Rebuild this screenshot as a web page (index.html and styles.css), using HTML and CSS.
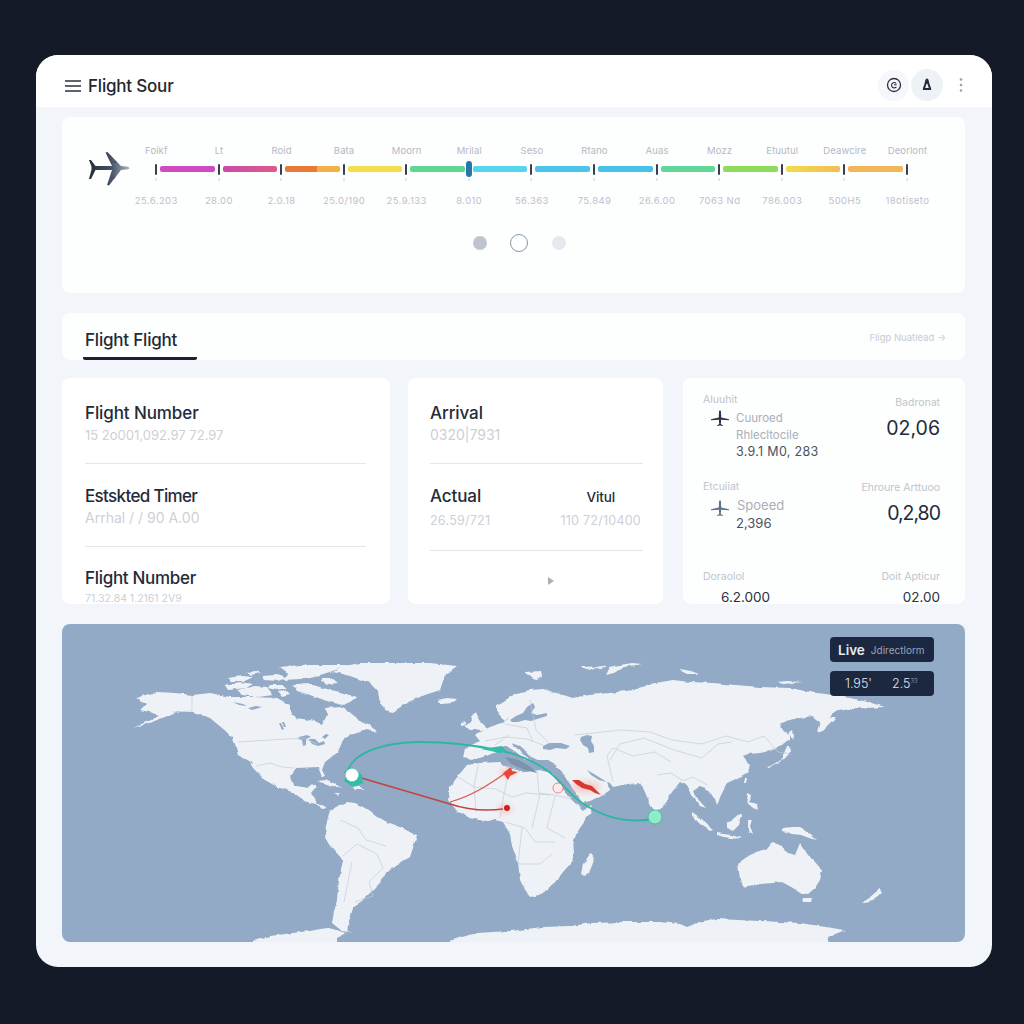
FILE: index.html
```html
<!DOCTYPE html>
<html lang="en">
<head>
<meta charset="utf-8">
<title>Flight Sour</title>
<link rel="stylesheet" href="styles.css">
</head>
<body>
<div class="app">
  <header class="topbar">
    <div class="brand">
      <svg class="menu" viewBox="0 0 16 12" width="16" height="12"><path d="M0 1h16M0 6h16M0 11h16" stroke="#2a3140" stroke-width="1.300" fill="none"/></svg>
      <span class="brand-name">Flight Sour</span>
    </div>
    <div class="actions">
      <span class="icon-btn first"><svg viewBox="0 0 16 16" width="16" height="16"><circle cx="8" cy="8" r="6.500" fill="none" stroke="#2a3140" stroke-width="1.300"/><path d="M10.300 6.500A2.700 2.700 0 1 0 10.400 9.800M8 7.800h2.600" fill="none" stroke="#2a3140" stroke-width="1.100"/></svg></span>
      <span class="icon-btn second"><svg viewBox="0 0 16 16" width="16" height="16"><path d="M8 1.500C6.300 1.500 6.200 4.500 5.300 7.500 4.800 9.300 3.800 10.500 3.800 13h8.400c0-2.500-1-3.700-1.500-5.500C9.800 4.500 9.700 1.500 8 1.500Z" fill="#252c3a"/><path d="M8 6.500C7.300 6.500 7 8.800 6.200 11h3.600C9 8.800 8.700 6.500 8 6.500Z" fill="#eef1f6"/></svg></span>
      <svg class="kebab" viewBox="0 0 4 16" width="4" height="16"><circle cx="2" cy="2.500" r="1.300" fill="#9aa1ac"/><circle cx="2" cy="8" r="1.300" fill="#9aa1ac"/><circle cx="2" cy="13.500" r="1.300" fill="#9aa1ac"/></svg>
    </div>
  </header>

  <main class="content">
    <section class="card timeline">
      <div class="timeline-row">
        <svg class="plane-side" viewBox="0 0 44 36" width="44" height="36">
          <defs><linearGradient id="pl" x1="0" x2="1"><stop offset="0" stop-color="#242c3a"/><stop offset=".55" stop-color="#465366"/><stop offset="1" stop-color="#aeb5be"/></linearGradient></defs>
          <path d="M1 9L3 9 7.500 15 24 15 17.500 1.500 19.500 1 33 15 40 15.700Q43 17 40 18.300L33 19 21 34.500 19 34 24 19 7.500 19 3 28 1 28 3.500 18.500 3.500 15.500Z" fill="url(#pl)"/>
          <path d="M24 9.500l4.500 1.200-.4 1.300-3-.6ZM22.500 26.500l4.500-.7.400 1.300-4.500 1Z" fill="#465366"/>
        </svg>
        <div class="stops">
          <div class="labels">
            <span>Foikf</span><span>Lt</span><span>Roid</span><span>Bata</span><span>Moorn</span><span>Mrilal</span><span>Seso</span><span>Rtano</span><span>Auas</span><span>Mozz</span><span>Etuutul</span><span>Deawcire</span><span>Deorlont</span>
          </div>
          <div class="track">
            <i class="tick"></i><b class="seg s1"></b><i class="tick"></i><b class="seg s2"></b><i class="tick"></i><b class="seg s3"></b><i class="tick"></i><b class="seg s4"></b><i class="tick"></i><b class="seg s5"></b><i class="tick now"></i><b class="seg s6"></b><i class="tick"></i><b class="seg s7"></b><i class="tick"></i><b class="seg s8"></b><i class="tick"></i><b class="seg s9"></b><i class="tick"></i><b class="seg s10"></b><i class="tick"></i><b class="seg s11"></b><i class="tick"></i><b class="seg s12"></b><i class="tick"></i>
          </div>
          <div class="labels values">
            <span>25.6.203</span><span>28.00</span><span>2.0.18</span><span>25.0/190</span><span>25.9.133</span><span>8.010</span><span>56.363</span><span>75.849</span><span>26.6.00</span><span>7063 Nd</span><span>786.003</span><span>500H5</span><span>18otiseto</span>
          </div>
        </div>
      </div>
      <div class="pager">
        <span class="dot grey"></span><span class="dot ring"></span><span class="dot pale"></span>
      </div>
    </section>

    <nav class="card tabs">
      <span class="tab">Flight Flight</span>
      <span class="tab-link">Fligp Nuatlead -&gt;</span>
    </nav>

    <section class="details">
      <article class="card info wide">
        <div class="field"><h3>Flight Number</h3><p class="long">15 2o001,092.97 72.97</p></div>
        <div class="field"><h3 class="tight">Estskted Timer</h3><p>Arrhal / / 90 A.00</p></div>
        <div class="field last"><h3 class="snug">Flight Number</h3><p class="small">71.32.84 1.2161 2V9</p></div>
      </article>

      <article class="card info narrow">
        <div class="field"><h3>Arrival</h3><p>0320|7931</p></div>
        <div class="field pair">
          <div><h3>Actual</h3><p class="mid">26.59/721</p></div>
          <div class="end"><h3 class="minor">Vitul</h3><p class="mid">110 72/10400</p></div>
        </div>
        <div class="more"><svg viewBox="0 0 6 8" width="6" height="8"><path d="M0 0l6 4-6 4Z" fill="#a8aeb8"/></svg></div>
      </article>

      <article class="card stats">
        <div class="stat first">
          <div class="stat-main">
            <span class="cap">Aluuhit</span>
            <div class="with-icon">
              <svg viewBox="0 0 20 20" width="20" height="20"><path d="M10 1.500c.6 0 1 .5 1 1.500l.2 5.500 7.800 1.700v1l-7.900-.4-.3 4.200 2 1.200v.8l-2.800-.6-2.800.6v-.8l2-1.200-.3-4.200-7.900.4v-1l7.800-1.700L9 3c0-1 .4-1.500 1-1.500Z" fill="#2a3446"/></svg>
              <div class="lines"><span>Cuuroed</span><span>Rhlecltocile</span><strong>3.9.1 M0, 283</strong></div>
            </div>
          </div>
          <div class="stat-side"><span class="cap">Badronat</span><em>02,06</em></div>
        </div>
        <div class="stat second">
          <div class="stat-main">
            <span class="cap">Etcuiiat</span>
            <div class="with-icon">
              <svg viewBox="0 0 20 20" width="20" height="20"><path d="M10 1.500c.6 0 1 .5 1 1.500l.2 5.500 7.800 1.700v1l-7.900-.4-.3 4.200 2 1.200v.8l-2.800-.6-2.800.6v-.8l2-1.200-.3-4.200-7.900.4v-1l7.800-1.700L9 3c0-1 .4-1.500 1-1.500Z" fill="#5f7187"/></svg>
              <div class="lines"><span class="lg">Spoeed</span><strong>2,396</strong></div>
            </div>
          </div>
          <div class="stat-side"><span class="cap">Ehroure Arttuoo</span><em class="squeeze">0,2,80</em></div>
        </div>
        <div class="stat third">
          <div class="stat-main"><span class="cap">Doraolol</span><strong class="indent">6.2.000</strong></div>
          <div class="stat-side"><span class="cap">Doit Apticur</span><strong>02.00</strong></div>
        </div>
      </article>
    </section>

    <section class="map">
      <svg class="map-svg" viewBox="62 624 903 318" width="903" height="318">
        <defs>
          <filter id="coast" filterUnits="userSpaceOnUse" x="62" y="624" width="903" height="340">
            <feTurbulence type="fractalNoise" baseFrequency=".11" numOctaves="3" seed="7" result="n"/>
            <feDisplacementMap in="SourceGraphic" in2="n" scale="3.500" xChannelSelector="R" yChannelSelector="G"/>
          </filter>
          <filter id="soft"><feGaussianBlur stdDeviation="2.500"/></filter>
        </defs>
        <g class="land" filter="url(#coast)">
          <!-- North America -->
          <path d="M136 698L145 695 157 692 175 693 193 695 210 693 230 697 253 697 277 698 290 705 290 712 296 718 310 720 322 725 327 715 325 708 343 707 357 718 370 725 377 733 367 730 350 735 343 740 338 752 325 762 322 770 325 776 322 777 318 767 297 768 290 777 293 785 307 788 312 784 316 787 311 793 317 803 327 808 322 809 316 804 307 802 292 792 277 787 265 780 255 768 253 763 238 755 233 737 222 728 210 718 200 714 193 712 180 712 170 715 152 722 133 728 150 720 160 716 150 712 140 710 146 704Z"/>
          <!-- Baja -->
          <path d="M250 763l5 1 12 15-2 1-12-12Z"/>
          <!-- Arctic -->
          <path d="M280 667L300 665 350 665 336 670 320 675 300 679 283 680 288 673Z"/>
          <path d="M293 685L310 684 323 688 340 692 357 697 350 702 343 705 330 702 310 695 297 691Z"/>
          <path d="M237 690L255 686 267 687 273 695 258 697 243 695Z"/>
          <path d="M225 685L240 682 253 684 246 688 228 690ZM227 678l14-2 12 1-8 4-14 0ZM262 676l14-1 10 3-8 3-14-1ZM270 685l13 0 4 3-12 2-7-2ZM278 691l8-1 4 4-8 2ZM246 672l10-1 5 2-10 2ZM297 673l8 0 0 3-8 0ZM322 678l10 0 6 5-10 1-8-3Z"/>
          <!-- Greenland -->
          <path d="M333 672L345 666 360 663 400 663 430 663 457 666 445 675 440 690 425 695 408 702 393 712 386 710 380 703 378 692 370 683 350 676Z"/>
          <path d="M437 700l10-2 10 1-4 4-12 1Z"/>
          <!-- Caribbean -->
          <path d="M317 781l10-1 9 4 7 4-10-2-9-3ZM352 786l8 1 4 3-9 0ZM334 793l6 0-2 2Z"/>
          <!-- UK -->
          <path d="M465 726l4-3 3-4-1-3 6-3 3 7 5 5 3 5-8 1-5-1-4 0ZM461 722l5-1 0 4-5 1Z"/>
          <!-- South America -->
          <path d="M330 810L338 806 347 802 355 803 365 808 377 817 395 825 417 835 414 845 410 857 395 866 382 877 380 883 370 893 362 901 353 907 350 918 347 930 352 932 342 931 332 923 334 912 337 900 339 880 343 860 334 850 325 837 326 825Z"/>
          <!-- Africa -->
          <path d="M448 800L450 787 458 776 467 765 480 763 500 762 507 768 527 772 540 770 553 774 560 785 570 798 582 810 593 805 590 814 580 828 573 840 574 852 572 862 563 872 552 886 540 895 530 897 524 888 520 880 518 862 512 845 510 834 503 822 495 820 488 821 478 820 470 818 458 812Z"/>
          <!-- Eurasia -->
          <path d="M463 758L465 748 480 741 475 735 490 727 505 722 510 716 506 720 497 713 497 705 517 693 530 690 543 689 560 694 573 698 590 695 610 693 633 690 650 684 673 680 690 682 713 683 735 685 760 687 790 688 810 692 833 695 860 700 885 707 865 708 850 709 833 712 828 722 817 732 820 722 812 716 800 718 790 720 782 723 780 727 790 735 790 741 775 748 765 752 760 753 748 754 743 756 750 765 748 772 738 778 727 783 722 792 717 806 715 800 710 792 700 787 694 790 696 797 706 808 700 806 692 796 686 785 680 782 672 792 663 807 656 812 651 806 644 790 640 783 628 784 613 787 610 783 607 782 610 790 600 797 590 801 582 803 573 790 562 772 555 764 548 760 538 760 530 757 526 752 519 746 512 743 520 752 530 760 524 759 516 752 505 745 497 752 483 757 472 760Z"/>
          <!-- Oceania + SE Asia -->
          <path d="M738 863L750 855 767 848 772 842 782 846 785 852 795 855 800 843 808 855 815 862 822 870 820 880 815 888 808 894 800 893 793 888 782 882 773 883 760 884 745 888 740 880Z"/>
          <path d="M803 898l8 0-1 4-6 0Z"/>
          <path d="M862 902l8-5 6-5 3-5 3 6-7 5-7 5Z"/>
          <path d="M590 853l4 2-1 8-4 10-5 4-3-3 2-10 5-7Z"/>
          <path d="M727 822l6-3 7-6 2 2-3 10-5 5-7-2ZM692 813l10 7 11 10-3 1-10-7-8-8ZM717 833l14 2 10 3-3 1-14-2-7-2ZM748 820l4 0-2 6 3 8-3-1-2-6ZM783 828l10-1 7 0 8 6 9 7-8-2-8-3-8-1-10-3Z"/>
          <path d="M767 767l6-2 8-5 4-8 2-6 2 0 1 6-4 6-8 5-9 5ZM792 740l-3-8 3-2 1 6ZM818 728l6-6 8-5 4 0-6 6-8 8-4 2Z"/>
          <path d="M747 793l4 2-1 6 6 3 1 6-4-2-3-4-3-6ZM745 778l2 0-1 5-2 0Z"/>
          <!-- Russian Arctic -->
          <path d="M608 667l24-4 10 1-18 3-10 6-8 2 2-4ZM525 672l16-1 1 5-7 4-4-4-6-2ZM582 667l24-1-4 2-18 1ZM777 682l10-1 16 1-20 2ZM679 669l12 2 8 3-12 0-6-3Z"/>
          <!-- Antarctica -->
          <path d="M253 940L270 936 293 933 310 931 327 928 340 931 347 933 337 938 337 960 253 960Z"/>
          <path d="M450 960L450 941 462 937 477 933 510 931 543 927 570 926 593 923 625 922 660 922 680 924 687 927 703 921 717 919 760 921 800 923 845 930 828 937 835 960Z"/>
        </g>
        <g class="water">
          <!-- Great Lakes -->
          <path d="M299 737l8-2 4 2-5 2 0 6-3 1-1-6-4-1ZM309 739l6 0 4 4 5-2 1 3-7 2-6-2-2-3ZM322 737l4-3 3 1-4 4Z"/>
          <path d="M279 723l2 0 3 6-2 1ZM282 722l2 0 2 5-2 0Z"/>
          <path d="M233 702l10 2 4 2-8-1ZM248 708l8-2 6 1-10 3Z"/>
          <!-- Black, Caspian -->
          <path d="M543 746l6-3 12 0 9 3-4 3-10-1-6 2-7-1Z"/>
          <path d="M581 737l6-2 5 1-1 5 3 5 0 6-5 1-1-5-5-3-3-5Z"/>
          <!-- Baltic -->
          <path d="M510 720l6-4 7-3 4-6 6-4 2 4-4 6 6 2 10-2 0 3-10 3-6 2-6-1-7 2-6 0Z"/>
          <!-- Persian Gulf -->
          <path d="M587 770l7 4 8 5 5 3-8-2-8-5Z"/>
        </g>
        <g class="borders">
          <path d="M458 777l16 10 22 2 16 8 14-4 24 2M478 766l-4 20 2 26M510 766l-6 28-4 24M537 771l2 22 16 2 16 4M505 822l20 6 10 14 20 0M522 828l-4 36 22 0 12-10M540 794l-8 34M555 796l-8 32 18 10"/>
          <path d="M172 712l20-1 0-15M238 742l65-4 14 6M256 766l14-3 12 4 12 1M340 820l18 8 8 12 20 6M343 856l14-12 20 10 6 14-14 14 4 14-18 6M352 862l-8 40"/>
          <path d="M575 735l45-5 30 2 22 8 30 4 24-8 22 6 16-6 14 16 12 2M610 760l10-16 24-6 30 12 28 8 16-14 14-2M613 782l-6-26 6-8 20 8 22-4 16 10M657 775l14-2 12 8 10-4 14 8"/>
          <path d="M485 741l20-4 22 2 16 6M505 724l22 4 6 14M530 700l6 30 14 14M495 745l14-10"/>
        </g>
        <g class="glows" filter="url(#soft)">
          <ellipse cx="507" cy="773" rx="7" ry="5"/>
          <ellipse cx="505" cy="809" rx="7" ry="5"/>
          <ellipse cx="586" cy="787" rx="14" ry="6"/>
        </g>
        <path class="sea-patch" d="M505 757l14 3 12 7 6 6-12-3-14-6Z"/>
        <path class="teal-sea" d="M563 776l7 9 11 17 5 2-3-1-12-15-9-11Z"/>
        <path class="red-area" d="M572 780l7 0 6 4 7 2 5 5 4 4-6-2-5-3-8-2-6-4Z"/>
        <path class="red-ring" d="M558 783c3 0 5 2 5 5s-2 5-5 5-5-2-5-5 2-5 5-5Z"/>
        <path class="route red" d="M358 777L450 804C468 810 488 811 503 809"/>
        <path class="route red-thin" d="M450 802C472 796 490 784 507 772"/>
        <path class="arrow-red" d="M503 773l8-6 1 4 6 1-8 4-2 4-2-3Z"/>
        <circle class="node-red" cx="507" cy="808" r="3"/>
        <path class="route teal" d="M347 773C352 752 385 742 420 742C450 742 478 746 497 750C520 754 535 762 548 771C562 782 570 795 582 803C600 815 625 824 653 819"/>
        <path class="arrow-teal" d="M488 748l14-2 5 6-8 1-8-2-10-2Z"/>
        <path class="halo" d="M344 772l8-5 10 8 1 8-10 4-9-6 2-4Z"/>
        <circle class="node-white" cx="352" cy="775" r="6.500"/>
        <circle class="node-green" cx="655" cy="817" r="7"/>
      </svg>
      <div class="overlay">
        <div class="pill"><strong>Live</strong><span>Jdirectlorm</span></div>
        <div class="pill metrics"><span>1.95'</span><span>2.5<sup>33</sup></span></div>
      </div>
    </section>
  </main>
</div>
</body>
</html>
```

FILE: styles.css
```css
* { box-sizing: border-box; }
html, body { margin: 0; height: 100%; }
body {
  background: #141a28;
  padding: 55px 32px 57px 36px;
  font-family: Inter, "Noto Sans", sans-serif;
  color: #222a36;
}
h3, p { margin: 0; font-weight: 500; }
.app {
  width: 956px;
  height: 912px;
  background: #f2f6fa;
  border-radius: 22px;
  overflow: hidden;
  display: flex;
  flex-direction: column;
}
.topbar {
  height: 52px;
  flex: none;
  background: #fff;
  display: flex;
  align-items: center;
  justify-content: space-between;
  padding: 10px 28px 0 29px;
}
.brand { display: flex; align-items: center; gap: 7px; }
.menu { display: block; margin-top: -1px; }
.brand-name { font-size: 17px; font-weight: 500; letter-spacing: -.2px; color: #222732; }
.actions { display: flex; align-items: center; }
.icon-btn { display: flex; align-items: center; justify-content: center; border-radius: 50%; }
.icon-btn.first { width: 31px; height: 31px; background: #f5f7fa; margin-top: -2px; }
.icon-btn.second { width: 32px; height: 32px; background: #eef1f6; margin: -2px 0 0 2px; }
.kebab { margin: -2px 1px 0 16px; }

.content {
  flex: 1;
  display: flex;
  flex-direction: column;
  padding: 10px 27px 25px 26px;
}
.card { background: #fff; border-radius: 8px; }

.timeline { height: 176px; flex: none; background: #fdfefe; padding-top: 25px; }
.timeline-row { display: flex; align-items: flex-start; padding-left: 26px; }
.plane-side { margin-top: 9px; flex: none; }
.stops { margin-left: -7px; width: 814px; flex: none; }
.labels { display: grid; grid-template-columns: repeat(13, 62.600px); font-size: 9.500px; line-height: 18px; color: #b4b9c3; text-align: center; white-space: nowrap; letter-spacing: .1px; }
.labels.values { margin-top: 15px; color: #bcc1ca; letter-spacing: .4px; }
.track { display: flex; align-items: center; height: 16px; padding: 0 31px 0 30px; margin-top: 1px; }
.tick { width: 2px; height: 11px; background: #3a3f4c; flex: none; border-radius: 1px; position: relative; }
.tick::after { content: ""; position: absolute; left: 0; top: 14px; width: 2px; height: 3px; background: #e4e6ea; }
.tick.now { width: 6px; height: 16px; background: #2379a6; border-radius: 3px; margin: 0 -2px; z-index: 1; }
.tick.now::after { left: 2px; top: 17px; }
.seg { flex: 1; height: 6px; margin: 0 3px; border-radius: 2px; }
.s1 { background: #cf4cc0; }
.s2 { background: linear-gradient(90deg, #c94bab, #de5b88); }
.s3 { background: linear-gradient(90deg, #e87a36 0, #e87a36 58%, #f2b147 58%); }
.s4 { background: #f7dd4a; }
.s5 { background: #5ed792; }
.s6 { background: #55d6ec; }
.s7 { background: #4cc3ea; }
.s8 { background: #49c0e6; }
.s9 { background: #62d79a; }
.s10 { background: #8edb5e; }
.s11 { background: linear-gradient(90deg, #f2dc4c, #f3bb55); }
.s12 { background: #f2b65a; }

.pager { display: flex; justify-content: center; align-items: center; margin-top: 24px; margin-left: 12px; }
.dot { border-radius: 50%; display: block; }
.dot.grey { width: 14px; height: 14px; background: #bfc5ce; }
.dot.ring { width: 18px; height: 18px; border: 1.500px solid #7f9aa6; margin: 0 24px 0 23px; background: #fff; }
.dot.pale { width: 14px; height: 14px; background: #e6e8ee; }

.tabs {
  height: 47px;
  flex: none;
  margin-top: 20px;
  display: flex;
  justify-content: space-between;
  padding: 0 19px 0 21px;
  background: #fdfefe;
}
.tab { width: 114px; height: 47px; font-size: 17px; font-weight: 500; line-height: 54px; border-bottom: 3px solid #1c212c; border-radius: 0 0 2px 2px; letter-spacing: -.2px; white-space: nowrap; padding-left: 2px; color: #242a36; }
.tab-link { font-size: 9.500px; color: #c7ccd4; line-height: 50px; }

.details {
  margin-top: 18px;
  display: grid;
  grid-template-columns: 328px 255px 282px;
  column-gap: 18px;
  height: 225px;
  flex: none;
}
.info { padding-top: 24px; }
.info.wide { padding-left: 23px; padding-right: 24px; }
.info.narrow { padding-left: 22px; padding-right: 20px; }
.field { padding-bottom: 18px; border-bottom: 1px solid #e3e6ea; margin-bottom: 21px; }
.field.last { border: 0; margin: 0; padding: 0; }
.field h3 { font-size: 17px; line-height: 22px; font-weight: 500; color: #242b37; letter-spacing: -.1px; white-space: nowrap; }
.field h3.tight { letter-spacing: -.65px; }
.field h3.snug { letter-spacing: -.3px; margin-top: -1px; }
.field p { margin-top: 1px; font-size: 14px; line-height: 20px; color: #ccd0d7; font-weight: 400; white-space: nowrap; }
.field p.long { font-size: 13px; }
.field p.small { font-size: 10.500px; line-height: 11px; margin-top: 4px; }
.field p.mid { font-size: 12.500px; margin-top: 4px; letter-spacing: .25px; }
.pair { display: flex; justify-content: space-between; padding-bottom: 19px; }
.end { text-align: center; margin-right: 2px; }
.end .mid { letter-spacing: .6px; }
.field h3.minor { font-size: 13.500px; line-height: 20px; padding-top: 2px; }
.more { display: flex; justify-content: center; margin-top: 26px; padding-left: 29px; }
.more svg { display: block; }

.stats { margin-left: 2px; width: 282px; padding: 0 25px 0 20px; background: #fdfefe; }
.stat { display: flex; justify-content: space-between; }
.stat-side { text-align: right; display: flex; flex-direction: column; }
.stat.first { height: 101px; padding-top: 15px; }
.stat.second { height: 87px; padding-top: 1px; }
.stat.third { padding-top: 4px; }
.stat.first .stat-side { padding-top: 3px; }
.stat.second .stat-side { padding-top: 1px; }
.cap { display: block; font-size: 10.500px; line-height: 14px; color: #c0c5cd; white-space: nowrap; }
.stat-side em { font-style: normal; font-size: 19.500px; line-height: 26px; margin-top: 5px; color: #232a37; }
.stat-side em.squeeze { letter-spacing: -1px; }
.with-icon { display: flex; gap: 6px; padding-left: 7px; margin-top: 3px; }
.with-icon svg { flex: none; margin-top: -1px; }
.lines { display: flex; flex-direction: column; font-size: 11.500px; line-height: 16.500px; color: #a9aeb8; white-space: nowrap; }
.lines .lg { font-size: 13px; line-height: 18px; padding-left: 1px; }
.lines strong { font-weight: 400; color: #4b525e; font-size: 12.500px; letter-spacing: .3px; margin-top: 1px; }
.stat.second .with-icon { margin-top: 2px; }
.stat.second .with-icon svg { margin-top: 3px; }
.stat.second .lines strong { font-size: 13px; line-height: 18px; margin-top: 0; letter-spacing: 0; }
.stat.third strong { font-weight: 400; font-size: 13.500px; line-height: 12px; margin-top: 7px; color: #2b323e; display: block; }
.stat.third .indent { padding-left: 18px; }

.map { margin-top: 21px; height: 318px; flex: none; position: relative; border-radius: 8px; overflow: hidden; background: #92aac6; }
.map-svg { display: block; }
.land { fill: #eef1f5; }
.water { fill: #92aac6; }
.borders { fill: none; stroke: #c6cdd7; stroke-width: .7; }
.glows { fill: #f9b9b4; opacity: .6; }
.red-area { fill: #d9372f; }
.red-ring { fill: #fbeaea; stroke: #e29090; stroke-width: 1; }
.sea-patch { fill: #7d93ad; }
.teal-sea { fill: #8aa6c2; }
.route { fill: none; }
.route.red { stroke: #c2443f; stroke-width: 1.500; }
.route.red-thin { stroke: #d8574f; stroke-width: 1.200; }
.route.teal { stroke: #2fb6a0; stroke-width: 1.800; }
.arrow-red { fill: #e8473c; }
.node-red { fill: #c9221f; }
.arrow-teal { fill: #35bba6; }
.halo { fill: #33bda6; }
.node-white { fill: #fff; }
.node-green { fill: #8fecc4; stroke: #2fb6a0; stroke-width: .8; }
.overlay { position: absolute; top: 13px; right: 31px; width: 104px; display: flex; flex-direction: column; gap: 9px; }
.pill { height: 25px; background: #1c2740; border-radius: 4px; display: flex; align-items: center; gap: 6px; padding-left: 8px; color: #fff; white-space: nowrap; }
.pill strong { font-size: 13.500px; font-weight: 600; color: #e6ebf0; }
.pill span { font-size: 10px; color: #9aa5b8; }
.pill.metrics { padding-left: 15px; gap: 20px; }
.pill.metrics span { font-size: 12.500px; font-weight: 300; color: #e3e7ee; }
.pill sup { font-size: 6px; color: #9aa5b8; }
```
